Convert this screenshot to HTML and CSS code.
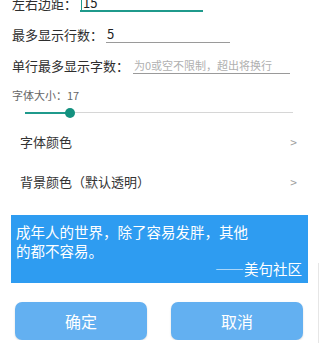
FILE: index.html
```html
<!DOCTYPE html>
<html lang="zh-CN">
<head>
    <meta charset="UTF-8">
    <meta name="viewport" content="width=device-width, initial-scale=1.0">
    <title>桌面插件设置</title>
    <link rel="stylesheet" href="styles.css">
</head>
<body>
    <div class="page">
        <div class="fields">
            <div class="field-row">
                <span class="label">左右边距：</span>
                <span class="input active input-margin"><span class="cursor"></span>15</span>
            </div>
            <div class="field-row">
                <span class="label">最多显示行数：</span>
                <span class="input input-lines">5</span>
            </div>
            <div class="field-row">
                <span class="label">单行最多显示字数：</span>
                <span class="input input-chars hint">为0或空不限制，超出将换行</span>
            </div>
        </div>

        <div class="size-label">字体大小：17</div>
        <div class="slider">
            <div class="track"></div>
            <div class="track-active"></div>
            <div class="thumb"></div>
        </div>

        <div class="option">
            <span>字体颜色</span>
            <span class="arrow">&gt;</span>
        </div>
        <div class="option">
            <span>背景颜色（默认透明）</span>
            <span class="arrow">&gt;</span>
        </div>

        <div class="preview">
            <p class="quote">成年人的世界，除了容易发胖，其他<br>的都不容易。</p>
            <p class="source">——美句社区</p>
        </div>

        <div class="actions">
            <button class="btn">确定</button>
            <button class="btn">取消</button>
        </div>
    </div>
    <div class="edge"></div>
</body>
</html>
```

FILE: styles.css
```css
body {
    margin: 0;
    padding: 0;
    background-color: #fff;
    color: #333;
    font-family: "Noto Sans CJK SC", "Noto Sans", sans-serif;
    overflow: hidden;
}

.page {
    margin-top: -5px;
}

.fields {
    display: flex;
    flex-direction: column;
    gap: 14px;
    padding-left: 12px;
}

.field-row {
    display: flex;
    align-items: flex-end;
    height: 17px;
}

.label {
    font-size: 13px;
    line-height: 17px;
    color: #2e2e2e;
    white-space: nowrap;
}

.input {
    box-sizing: border-box;
    height: 17px;
    margin-left: 3px;
    padding-left: 1px;
    font-size: 13px;
    line-height: 16px;
    color: #222;
    border-bottom: 1px solid #9a9a9a;
    position: relative;
}

.input.active {
    border-bottom: 2px solid #1f9a8c;
}

.cursor {
    display: inline-block;
    width: 1px;
    height: 13px;
    margin-right: 1px;
    vertical-align: -2px;
    background-color: #1f9a8c;
}

.input-margin {
    width: 123px;
}

.input-lines {
    width: 124px;
}

.input-chars {
    width: 157px;
    margin-left: 4px;
}

.hint {
    font-size: 11px;
    color: #b0b0b0;
}

.size-label {
    margin-top: 14px;
    padding-left: 12px;
    font-size: 11px;
    line-height: 14px;
    color: #666;
}

.slider {
    position: relative;
    height: 16px;
    margin: 3px 27px 0 25px;
}

.track {
    position: absolute;
    left: 0;
    right: 0;
    top: 7px;
    height: 1px;
    background-color: #d6d6d6;
}

.track-active {
    position: absolute;
    left: 0;
    width: 45px;
    top: 7px;
    height: 2px;
    background-color: #1f9a8c;
}

.thumb {
    position: absolute;
    left: 40px;
    top: 3px;
    width: 10px;
    height: 10px;
    border-radius: 50%;
    background-color: #13917f;
}

.option {
    display: flex;
    justify-content: space-between;
    align-items: center;
    height: 40px;
    padding: 0 23px 0 20px;
    font-size: 13px;
    color: #333;
}

.option:first-of-type {
    margin-top: 3px;
}

.arrow {
    font-size: 12px;
    color: #a0a0a0;
}

.preview {
    margin: 14px 12px 0 11px;
    padding: 7px 6px 5px 5px;
    background-color: #2e9cf1;
    color: #fff;
}

.preview p {
    margin: 0;
}

.quote {
    font-size: 14.5px;
    line-height: 19px;
}

.source {
    text-align: right;
    font-size: 14.5px;
    line-height: 18px;
}

.actions {
    display: flex;
    justify-content: space-between;
    margin: 19px 17px 0 15px;
}

.btn {
    width: 132px;
    height: 38px;
    border: none;
    border-radius: 7px;
    background-color: #63b0f1;
    color: #fff;
    font-family: inherit;
    font-size: 16px;
    box-shadow: 0 1px 2px rgba(0, 0, 0, 0.15);
}

.edge {
    position: absolute;
    right: 1px;
    top: 263px;
    bottom: 0;
    width: 1px;
    background-color: #e6e6e6;
}
```
